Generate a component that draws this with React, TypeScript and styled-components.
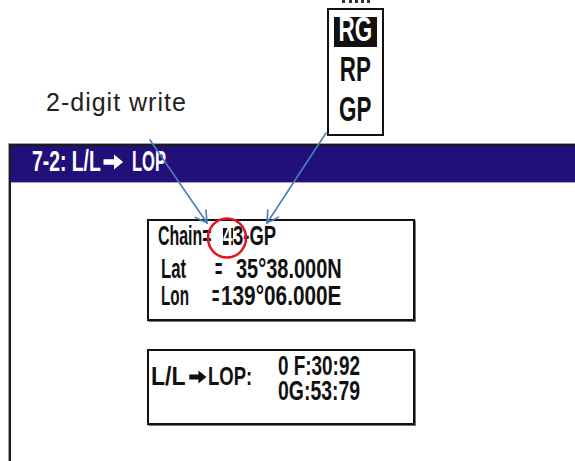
import React from 'react';
import styled, { createGlobalStyle } from 'styled-components';

const GlobalStyle = createGlobalStyle`
  html, body {
    margin: 0;
    padding: 0;
    background: #fff;
  }
  body {
    font-family: "Liberation Sans", Arial, sans-serif;
  }
`;

const Page = styled.div`
  position: relative;
  width: 575px;
  height: 461px;
  overflow: hidden;
  background: #fff;
`;

const TopArea = styled.div`
  display: flex;
  align-items: flex-start;
  height: 144px;
`;

const Caption = styled.div`
  margin: 90px 0 0 46px;
  width: 141px;
  font-size: 25px;
  line-height: 25px;
  letter-spacing: 1px;
  color: #222;
  white-space: nowrap;
`;

const ModeColumn = styled.div`
  margin-left: 140px;
  width: 57px;
  display: flex;
  flex-direction: column;
  align-items: center;
`;

const Scrap = styled.div`
  width: 28px;
  height: 0;
  border-top: 3px dotted #333;
  margin-bottom: 5px;
`;

const ModeBox = styled.div`
  width: 57px;
  box-sizing: border-box;
  border: 2px solid #111;
  padding: 7px 0;
  display: flex;
  flex-direction: column;
  align-items: center;
  gap: 10px;
`;

const ModeItem = styled.div<{ $active?: boolean }>`
  width: 43px;
  height: 30px;
  display: flex;
  justify-content: center;
  font-size: 35px;
  line-height: 24px;
  font-weight: bold;
  background: ${p => (p.$active ? '#111' : 'transparent')};
  color: ${p => (p.$active ? '#fff' : '#111')};
`;

const ModeText = styled.span`
  display: inline-block;
  transform: scaleX(0.64);
  transform-origin: center;
  white-space: pre;
`;

const Panel = styled.section`
  margin-left: 9px;
  width: 600px;
  height: 340px;
  box-sizing: border-box;
  border: 2px solid #1b1b1b;
  box-shadow: 0 0 0 1px #a0a0a0;
`;

const TitleBar = styled.header`
  height: 36px;
  background: #22107a;
  border-bottom: 1px solid #a59fd6;
  display: flex;
  align-items: flex-start;
  padding-left: 21px;
  color: #fff;
  font-size: 30px;
  line-height: 30px;
  font-weight: bold;
`;

const Lcd = styled.span<{ $sx: number; $w?: number }>`
  display: inline-block;
  white-space: pre;
  transform: scaleX(${p => p.$sx});
  transform-origin: left center;
  ${p => (p.$w !== undefined ? `width: ${p.$w}px; flex: none;` : '')}
`;

const ArrowSlot = styled.span<{ $w: number; $top: number }>`
  display: inline-flex;
  width: ${p => p.$w}px;
  padding-top: ${p => p.$top}px;
  flex: none;
`;

const LcdBox = styled.div<{ $h: number; $mt: number }>`
  width: 268px;
  height: ${p => p.$h}px;
  margin: ${p => p.$mt}px 0 0 136px;
  box-sizing: border-box;
  border: 2px solid #111;
  box-shadow: 0 0 1px 0.5px #777;
  color: #111;
  font-weight: bold;
`;

const PositionBox = styled(LcdBox)`
  padding: 2px 0 0 9px;
`;

const ResultBox = styled(LcdBox)`
  display: flex;
  align-items: flex-start;
  padding: 3px 0 0 2px;
`;

const Row = styled.div<{ $indent?: number; $gap?: number }>`
  display: flex;
  align-items: flex-start;
  height: 27px;
  font-size: 27px;
  line-height: 27px;
  padding-left: ${p => p.$indent ?? 0}px;
  margin-bottom: ${p => p.$gap ?? 0}px;
`;

const Cursor = styled.span`
  display: inline-block;
  flex: none;
  width: 10px;
  height: 17px;
  margin-top: 5px;
  line-height: 17px;
  background: #111;
  color: #fff;
`;

const ResultLabel = styled.div`
  display: flex;
  align-items: flex-start;
  width: 127px;
  margin-top: 10px;
  font-size: 25px;
  line-height: 25px;
`;

const ResultValues = styled.div`
  display: flex;
  flex-direction: column;
  font-size: 27px;
  line-height: 25px;
`;

const Overlay = styled.svg`
  position: absolute;
  left: 0;
  top: 0;
  pointer-events: none;
`;

const BlockArrow = ({ w, h, color }: { w: number; h: number; color: string }) => (
  <svg width={w} height={h} viewBox="0 0 20 16">
    <path d="M0 5.2H10.5V0.5L19.6 8L10.5 15.5V10.8H0Z" fill={color} />
  </svg>
);

const head = (fx: number, fy: number, tx: number, ty: number, len = 13, ang = 0.52) => {
  const dx = fx - tx;
  const dy = fy - ty;
  const d = Math.hypot(dx, dy);
  const ux = dx / d;
  const uy = dy / d;
  const c = Math.cos(ang);
  const s = Math.sin(ang);
  const a = [tx + len * (ux * c - uy * s), ty + len * (ux * s + uy * c)];
  const b = [tx + len * (ux * c + uy * s), ty + len * (-ux * s + uy * c)];
  return `M${a[0]} ${a[1]}L${tx} ${ty}L${b[0]} ${b[1]}`;
};

const BLUE = '#4a7ebb';

export default function App() {
  return (
    <>
      <GlobalStyle />
      <Page>
        <TopArea>
          <Caption>2-digit write</Caption>
          <ModeColumn>
            <Scrap />
            <ModeBox>
              <ModeItem $active><ModeText>RG</ModeText></ModeItem>
              <ModeItem><ModeText>RP</ModeText></ModeItem>
              <ModeItem><ModeText>GP</ModeText></ModeItem>
            </ModeBox>
          </ModeColumn>
        </TopArea>

        <Panel>
          <TitleBar>
            <Lcd $sx={0.645} $w={71}>7-2: L/L</Lcd>
            <ArrowSlot $w={29} $top={8}>
              <BlockArrow w={21} h={16} color="#fff" />
            </ArrowSlot>
            <Lcd $sx={0.55}>LOP</Lcd>
          </TitleBar>

          <PositionBox $h={102} $mt={36}>
            <Row $gap={6}>
              <Lcd $sx={0.59} $w={65}>Chain=</Lcd>
              <Cursor><Lcd $sx={0.65}>4</Lcd></Cursor>
              <Lcd $sx={0.685}>3-GP</Lcd>
            </Row>
            <Row $indent={3}>
              <Lcd $sx={0.62} $w={54}>Lat</Lcd>
              <Lcd $sx={0.46} $w={21}>=</Lcd>
              <Lcd $sx={0.74}>35°38.000N</Lcd>
            </Row>
            <Row $indent={3}>
              <Lcd $sx={0.565} $w={51}>Lon</Lcd>
              <Lcd $sx={0.46} $w={9}>=</Lcd>
              <Lcd $sx={0.77}>139°06.000E</Lcd>
            </Row>
          </PositionBox>

          <ResultBox $h={76} $mt={28}>
            <ResultLabel>
              <Lcd $sx={0.92} $w={38}>L/L</Lcd>
              <ArrowSlot $w={19} $top={6}>
                <BlockArrow w={18} h={14} color="#111" />
              </ArrowSlot>
              <Lcd $sx={0.74}>LOP:</Lcd>
            </ResultLabel>
            <ResultValues>
              <Lcd $sx={0.7}>0 F:30:92</Lcd>
              <Lcd $sx={0.72}>0G:53:79</Lcd>
            </ResultValues>
          </ResultBox>
        </Panel>

        <Overlay width={575} height={461} viewBox="0 0 575 461">
          <g stroke={BLUE} strokeWidth={1.6} fill="none" strokeLinecap="round">
            <path d="M150 140L207 223" />
            <path d={head(150, 140, 207, 223)} />
            <path d="M326 133L267 223" />
            <path d={head(326, 133, 267, 223)} />
          </g>
          <ellipse cx={227} cy={238} rx={19} ry={19.5} fill="none" stroke="#e5141c" strokeWidth={2.5} />
        </Overlay>
      </Page>
    </>
  );
}
